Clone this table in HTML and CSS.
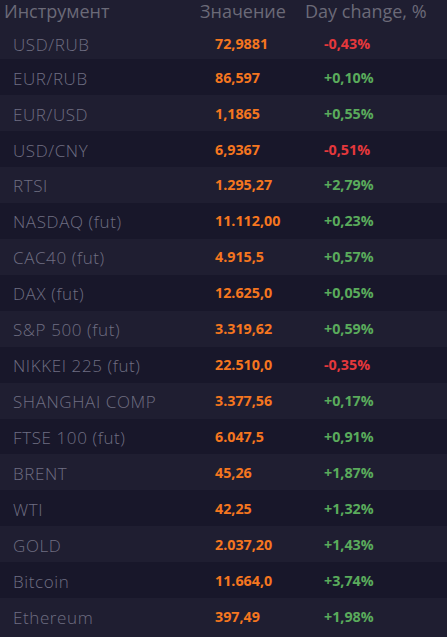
FILE: index.html
```html
<!DOCTYPE html>
<html lang="ru">
<head>
<meta charset="utf-8">
<title>Котировки</title>
<link rel="stylesheet" href="styles.css">
</head>
<body>
<div class="table">
  <div class="head">
    <div class="h-name">Инструмент</div>
    <div class="h-val">Значение</div>
    <div class="h-chg">Day change, %</div>
  </div>
  <div class="row"><div class="name">USD/RUB</div><div class="val">72,9881</div><div class="chg down">-0,43%</div></div>
  <div class="row"><div class="name">EUR/RUB</div><div class="val">86,597</div><div class="chg up">+0,10%</div></div>
  <div class="row"><div class="name">EUR/USD</div><div class="val">1,1865</div><div class="chg up">+0,55%</div></div>
  <div class="row"><div class="name">USD/CNY</div><div class="val">6,9367</div><div class="chg down">-0,51%</div></div>
  <div class="row"><div class="name">RTSI</div><div class="val">1.295,27</div><div class="chg up">+2,79%</div></div>
  <div class="row"><div class="name">NASDAQ (fut)</div><div class="val">11.112,00</div><div class="chg up">+0,23%</div></div>
  <div class="row"><div class="name">CAC40 (fut)</div><div class="val">4.915,5</div><div class="chg up">+0,57%</div></div>
  <div class="row"><div class="name">DAX (fut)</div><div class="val">12.625,0</div><div class="chg up">+0,05%</div></div>
  <div class="row"><div class="name">S&amp;P 500 (fut)</div><div class="val">3.319,62</div><div class="chg up">+0,59%</div></div>
  <div class="row"><div class="name">NIKKEI 225 (fut)</div><div class="val">22.510,0</div><div class="chg down">-0,35%</div></div>
  <div class="row"><div class="name">SHANGHAI COMP</div><div class="val">3.377,56</div><div class="chg up">+0,17%</div></div>
  <div class="row"><div class="name">FTSE 100 (fut)</div><div class="val">6.047,5</div><div class="chg up">+0,91%</div></div>
  <div class="row"><div class="name">BRENT</div><div class="val">45,26</div><div class="chg up">+1,87%</div></div>
  <div class="row"><div class="name">WTI</div><div class="val">42,25</div><div class="chg up">+1,32%</div></div>
  <div class="row"><div class="name">GOLD</div><div class="val">2.037,20</div><div class="chg up">+1,43%</div></div>
  <div class="row"><div class="name">Bitcoin</div><div class="val">11.664,0</div><div class="chg up">+3,74%</div></div>
  <div class="row"><div class="name">Ethereum</div><div class="val">397,49</div><div class="chg up">+1,98%</div></div>
</div>
</body>
</html>
```
FILE: styles.css
```css
html, body {
  margin: 0;
  padding: 0;
  background: #1f1e31;
}
.table {
  display: flex;
  flex-direction: column;
}
.head {
  display: grid;
  grid-template-columns: 196px 105px 1fr;
  height: 25.4px;
  flex: none;
  padding-left: 4px;
  font-family: "Open Sans", "DejaVu Sans", sans-serif;
  font-size: 18px;
  line-height: 23px;
  color: #6b6a78;
  white-space: nowrap;
}
.row {
  display: grid;
  grid-template-columns: 202px 109px 1fr;
  box-sizing: border-box;
  flex: none;
  height: 35.93px;
  padding-left: 13px;
  padding-top: 5.4px;
  white-space: nowrap;
}
.head + .row {
  height: 33.9px;
}
.row:nth-child(odd) {
  background: #18172a;
}
.row:nth-child(even) {
  background: #1f1e31;
}
.name {
  font-family: "Open Sans", "DejaVu Sans", sans-serif;
  font-weight: 300;
  font-size: 17px;
  line-height: 28px;
  letter-spacing: 0.6px;
  color: #6f6e82;
}
.val, .chg {
  font-family: "Open Sans", "DejaVu Sans", sans-serif;
  font-weight: 700;
  font-size: 14.3px;
  line-height: 26px;
}
.val { color: #f5761f; }
.chg.up { color: #5aab5c; }
.chg.down { color: #e5383c; }
```
